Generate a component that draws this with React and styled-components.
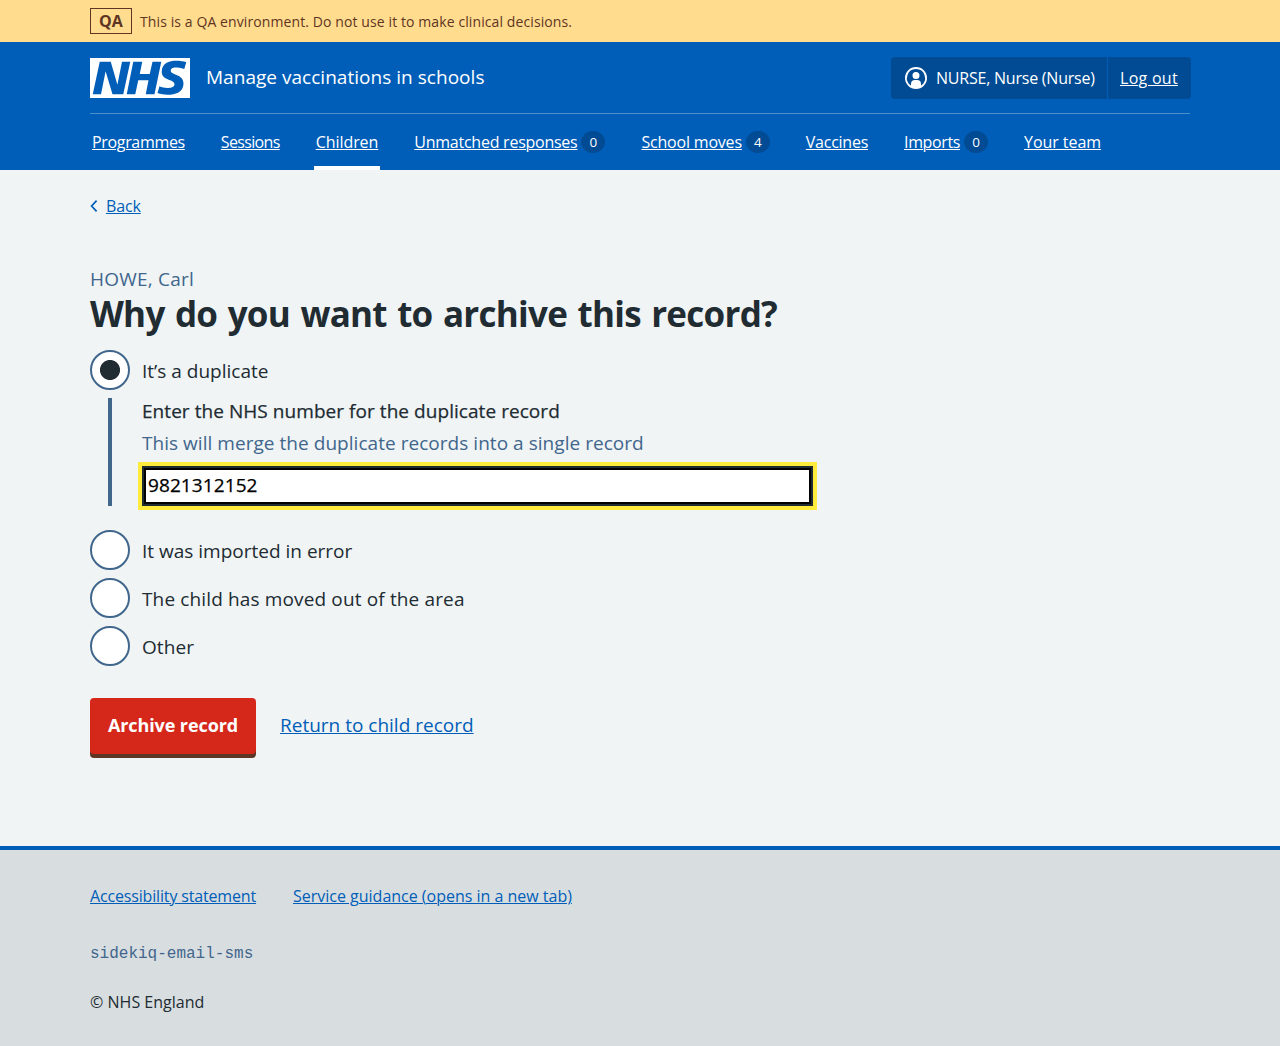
import React, { useState } from "react";
import styled, { createGlobalStyle } from "styled-components";

const blue = "#005eb8";
const darkBlue = "#004b93";
const ink = "#212b32";
const slate = "#41668c";
const brown = "#5f3523";

const GlobalStyle = createGlobalStyle`
  *, *::before, *::after { box-sizing: border-box; }
  body {
    margin: 0;
    background: #d8dde0;
    color: ${ink};
    font-family: "Open Sans", "Noto Sans", sans-serif;
    font-size: 16px;
    line-height: 24px;
  }
`;

const Container = styled.div`
  width: 1100px;
  margin: 0 auto;
`;

const Text = styled.span`
  letter-spacing: ${(p) => p.$track || 0}px;
  white-space: nowrap;
`;

const Link = styled.a`
  color: ${(p) => (p.$light ? "#fff" : blue)};
  letter-spacing: ${(p) => p.$track || 0}px;
  text-decoration: underline;
  text-decoration-thickness: 1px;
  text-underline-offset: 1px;
  white-space: nowrap;
`;

const Banner = styled.div`
  height: 42px;
  background: #ffdc8e;
  color: ${brown};
`;

const BannerInner = styled(Container)`
  display: flex;
  align-items: center;
  gap: 8px;
  height: 42px;
  font-size: 14px;
`;

const BannerText = styled(Text)`
  padding-top: 2px;
`;

const EnvTag = styled.strong`
  width: 42px;
  height: 26px;
  border: 1px solid ${brown};
  font-size: 16px;
  line-height: 25px;
  text-align: center;
`;

const Header = styled.header`
  height: 128px;
  background: ${blue};
  color: #fff;
`;

const HeaderTop = styled(Container)`
  display: flex;
  align-items: center;
  height: 72px;
  border-bottom: 1px solid rgba(255, 255, 255, 0.3);
`;

const Logo = styled.svg`
  width: 100px;
  height: 40px;
  margin-right: 16px;
`;

const ServiceName = styled(Text)`
  flex: 1;
  padding-bottom: 2px;
  font-size: 19px;
`;

const Account = styled.div`
  display: flex;
  width: 300px;
  height: 42px;
  margin-right: -1px;
  border-radius: 4px;
  background: ${darkBlue};
  line-height: 42px;
`;

const User = styled.div`
  display: flex;
  align-items: center;
  gap: 8px;
  width: 217px;
  padding-left: 13px;
  border-right: 1px solid ${blue};
`;

const LogOut = styled.div`
  padding-left: 12px;
`;

const Nav = styled.nav`
  width: 1100px;
  margin: 0 auto;
  display: flex;
  gap: 32px;
`;

const NavItem = styled.div`
  display: flex;
  align-items: center;
  gap: 4px;
  height: 56px;
  padding: 4px 2px 0;
  border-bottom: 4px solid ${(p) => (p.$current ? "#fff" : "transparent")};
`;

const Count = styled.span`
  width: 24px;
  height: 22px;
  border-radius: 50%;
  background: ${darkBlue};
  font-size: 13.5px;
  line-height: 23px;
  text-align: center;
`;

const Main = styled.main`
  height: 676px;
  padding-top: 24px;
  background: #f0f4f5;
`;

const BackRow = styled.div`
  display: flex;
  align-items: center;
  gap: 8px;
  height: 24px;
`;

const Caption = styled.div`
  margin-top: 47px;
  color: ${slate};
  font-size: 19px;
  line-height: 28px;
`;

const Heading = styled.h1`
  margin: 0 0 15px;
  font-size: 35px;
  font-weight: 700;
  line-height: 42px;
  letter-spacing: -0.73px;
  word-spacing: 2px;
`;

const Option = styled.label`
  display: flex;
  align-items: center;
  gap: 12px;
  height: 40px;
  margin-bottom: 8px;
  font-size: 19px;
  line-height: 28px;

  ${Text} {
    padding-top: 2px;
  }
`;

const Radio = styled.input`
  appearance: none;
  flex: none;
  width: 40px;
  height: 40px;
  margin: 0;
  border: 2px solid ${slate};
  border-radius: 50%;
  background: ${(p) => (p.checked ? `radial-gradient(circle, ${ink} 9.6px, #fff 10.4px)` : "#fff")};
`;

const Conditional = styled.div`
  width: 705px;
  height: 108px;
  margin: 0 0 24px 18px;
  padding-left: 30px;
  border-left: 4px solid ${slate};
  font-size: 19px;
`;

const FieldLabel = styled.label`
  display: block;
  height: 28px;
  line-height: 26px;
  letter-spacing: 0.055px;
  -webkit-text-stroke: 0.25px currentColor;
`;

const Hint = styled.div`
  height: 40px;
  color: ${slate};
  line-height: 34px;
  letter-spacing: 0.04px;
`;

const InputFrame = styled.div`
  width: 671px;
  height: 40px;
  padding: 2px;
  background: ${ink};
  outline: 4px solid #ffeb3b;
`;

const TextInput = styled.input`
  display: block;
  width: 667px;
  height: 36px;
  padding: 0 2px 2px;
  border: 2px solid #000;
  border-radius: 0;
  outline: 0;
  background: #fff;
  color: #000;
  font: inherit;
  letter-spacing: 0.09px;
  -webkit-text-stroke: 0.25px currentColor;
`;

const Actions = styled.div`
  display: flex;
  gap: 24px;
  margin-top: 32px;
  font-size: 19px;
  line-height: 54px;
`;

const Button = styled.button`
  width: 166px;
  height: 56px;
  padding: 0 0 2px;
  border: 0;
  border-radius: 4px;
  background: #d5281b;
  box-shadow: 0 4px 0 ${brown};
  color: #fff;
  font: 700 18px/54px "Open Sans", "Noto Sans", sans-serif;
  letter-spacing: -0.1px;
`;

const Footer = styled.footer`
  height: 200px;
  padding-top: 34px;
  border-top: 4px solid ${blue};
  background: #d8dde0;
`;

const FooterLinks = styled.div`
  display: flex;
  gap: 37px;
  margin-bottom: 34px;
`;

const Release = styled.div`
  margin-bottom: 24px;
  color: ${slate};
  font: 16px/24px "Liberation Mono", monospace;
`;

const NhsLogo = () => (
  <Logo viewBox="0 0 200 80" role="img" aria-label="NHS">
    <path
      fill="#fff"
      d="M200 0v80H0V0h200Zm-27.5 5.5c-14.5 0-29 5-29 22 0 10.2 7.7 13.5 14.7 16.3l.7.3c5.4 2 10.1 3.9 10.1 8.4 0 6.5-8.5 7.5-14 7.5s-12.5-1.5-16-3.5L135 70c5.5 2 13.5 3.5 20 3.5 15.5 0 32-4.5 32-22.5 0-19.5-25.5-16.5-25.5-25.5 0-5.5 5.5-6.5 12.5-6.5a35 35 0 0 1 14.5 3l4-13.5c-4.5-2-12-3-20-3Zm-131 2h-22l-14 65H22l9-45h.5l13.5 45h21.5l14-65H64l-9 45h-.5l-13-45Zm63 0h-18l-13 65h17l6-28H117l-5.5 28H129l13.5-65H125L119.5 32h-20l5-24.5Z"
    />
  </Logo>
);

const UserIcon = () => (
  <svg width="24" height="24" viewBox="0 0 24 24" aria-hidden="true">
    <path
      fill="#fff"
      d="M12 1a11 11 0 1 1 0 22 11 11 0 0 1 0-22Zm0 2a9 9 0 0 0-5 16.5V18a4 4 0 0 1 4-4h2a4 4 0 0 1 4 4v1.5A9 9 0 0 0 12 3Zm0 3a3.5 3.5 0 1 1-3.5 3.5A3.4 3.4 0 0 1 12 6Z"
    />
  </svg>
);

const Chevron = () => (
  <svg width="8" height="14" viewBox="0 0 8 14" aria-hidden="true">
    <path d="M6.6 1.6 1.6 7l5 5.4" fill="none" stroke={blue} strokeWidth="1.7" />
  </svg>
);

const navItems = [
  { label: "Programmes", track: -0.33 },
  { label: "Sessions", track: -0.66 },
  { label: "Children", track: -0.06, current: true },
  { label: "Unmatched responses", track: -0.25, count: 0 },
  { label: "School moves", track: -0.2, count: 4 },
  { label: "Vaccines", track: -0.25 },
  { label: "Imports", track: -0.37, count: 0 },
  { label: "Your team", track: -0.05 },
];

const laterOptions = [
  { value: "error", label: "It was imported in error", track: 0 },
  { value: "moved", label: "The child has moved out of the area", track: 0.14 },
  { value: "other", label: "Other", track: 0.08 },
];

export default function App() {
  const [reason, setReason] = useState("duplicate");
  const [number, setNumber] = useState("9821312152");
  const radio = (value) => (
    <Radio type="radio" name="reason" checked={reason === value} onChange={() => setReason(value)} />
  );

  return (
    <>
      <GlobalStyle />
      <Banner>
        <BannerInner>
          <EnvTag>QA</EnvTag>
          <BannerText $track={0.1}>This is a QA environment. Do not use it to make clinical decisions.</BannerText>
        </BannerInner>
      </Banner>
      <Header>
        <HeaderTop>
          <NhsLogo />
          <ServiceName $track={0.03}>Manage vaccinations in schools</ServiceName>
          <Account>
            <User>
              <UserIcon />
              <Text $track={-0.22}>NURSE, Nurse (Nurse)</Text>
            </User>
            <LogOut>
              <Link href="#" $light $track={0.28}>Log out</Link>
            </LogOut>
          </Account>
        </HeaderTop>
        <Nav>
          {navItems.map((item) => (
            <NavItem key={item.label} $current={item.current}>
              <Link href="#" $light $track={item.track}>{item.label}</Link>
              {item.count !== undefined && <Count>{item.count}</Count>}
            </NavItem>
          ))}
        </Nav>
      </Header>
      <Main>
        <Container>
          <BackRow>
            <Chevron />
            <Link href="#" $track={-0.15}>Back</Link>
          </BackRow>
          <Caption><Text $track={0.22}>HOWE, Carl</Text></Caption>
          <Heading>Why do you want to archive this record?</Heading>
          <Option>
            {radio("duplicate")}
            <Text>It’s a duplicate</Text>
          </Option>
          <Conditional>
            <FieldLabel htmlFor="nhs-number">Enter the NHS number for the duplicate record</FieldLabel>
            <Hint>This will merge the duplicate records into a single record</Hint>
            <InputFrame>
              <TextInput id="nhs-number" value={number} onChange={(e) => setNumber(e.target.value)} />
            </InputFrame>
          </Conditional>
          {laterOptions.map((o) => (
            <Option key={o.value}>
              {radio(o.value)}
              <Text $track={o.track}>{o.label}</Text>
            </Option>
          ))}
          <Actions>
            <Button type="button">Archive record</Button>
            <Link href="#">Return to child record</Link>
          </Actions>
        </Container>
      </Main>
      <Footer>
        <Container>
          <FooterLinks>
            <Link href="#" $track={-0.16}>Accessibility statement</Link>
            <Link href="#" $track={-0.01}>Service guidance (opens in a new tab)</Link>
          </FooterLinks>
          <Release>sidekiq-email-sms</Release>
          <Text $track={0.02}>© NHS England</Text>
        </Container>
      </Footer>
    </>
  );
}
